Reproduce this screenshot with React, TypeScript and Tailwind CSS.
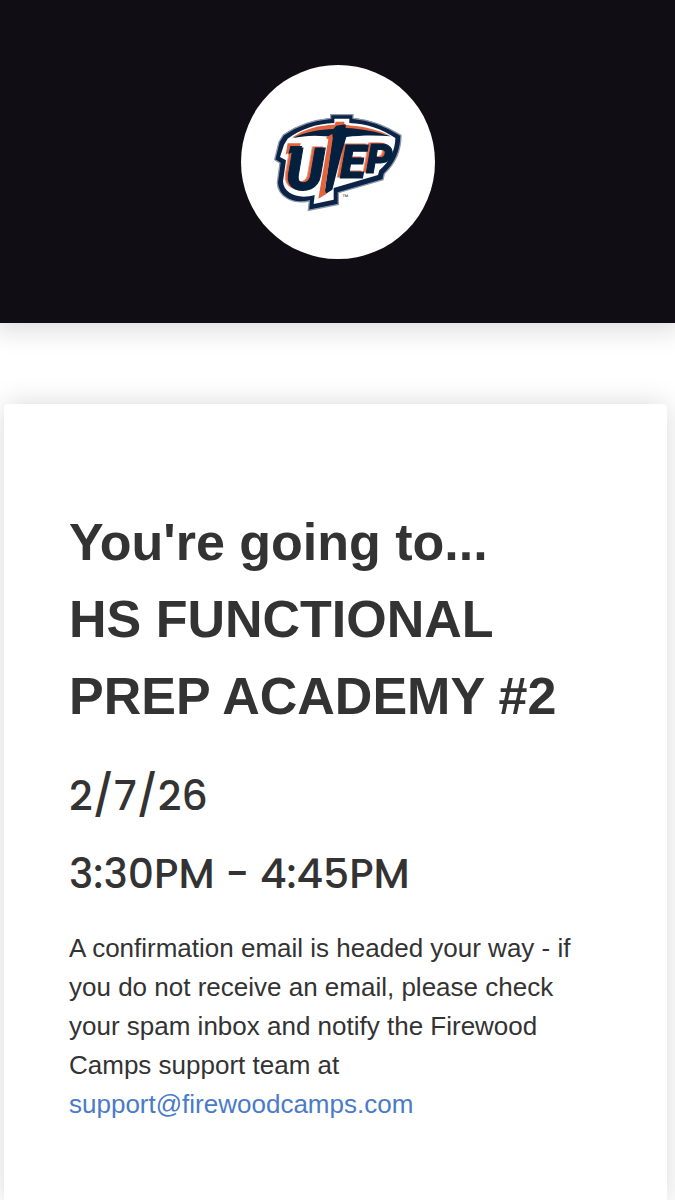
function UtepLogo() {
  return (
    <svg
      className="w-[130px] h-[100px]"
      viewBox="130 170 390 300"
      role="img"
      aria-label="UTEP Miners"
    >
      {/* shield */}
      <path
        d="M303 178H370V189C415 192 464 209 514 240C514 278 500 322 464 355L460 373L326 412V447L236 465L239 437C190 448 145 424 143 382L151 323L135 313L148 260L161 239C200 211 250 194 303 189Z"
        fill="#0b2347"
        stroke="#8d99a8"
        strokeWidth="4"
      />
      <path
        d="M314 190H359V203C410 205 455 220 497 248C497 281 482 318 449 345L445 359L312 398V433L252 446L255 419C208 434 161 415 160 378L169 315L151 305L163 268L174 250C210 223 259 205 314 203Z"
        fill="#fff"
      />

      {/* lettering */}
      <g
        className="[font-family:Roboto,sans-serif] font-black italic [filter:drop-shadow(-8px_-3px_0_#e2643f)]"
        fill="#04203f"
        stroke="#04203f"
        strokeWidth="3"
      >
        <text x="168" y="405" fontSize="178">
          U
        </text>
        <text x="332" y="369" fontSize="140">
          E
        </text>
        <text x="410" y="353" fontSize="124">
          P
        </text>
      </g>

      {/* serifs */}
      <path
        d="M174 264H214L203 290L190 285L168 298Z"
        fill="#e2643f"
      />
      <path d="M182 272H218L206 296L192 289L176 297Z" fill="#04203f" />

      {/* pickaxe */}
      <path
        d="M188 246C225 220 270 209 315 208L318 199H344V208L368 211C413 215 447 225 478 239L350 225L330 222L298 235Z"
        fill="#e2643f"
      />
      <path
        d="M188 249C228 229 275 222 311 221L320 211L348 207V218C397 220 440 229 485 243C438 239 390 240 350 245L334 300L308 403L284 418L308 246L288 243C253 239 221 241 188 249Z"
        fill="#04203f"
      />
      <path
        d="M288 248L308 235L309 251L286 405L290 416L266 430L296 252Z"
        fill="#e2643f"
      />
      <text
        className="[font-family:'Liberation_Sans',sans-serif]"
        x="336"
        y="430"
        fontSize="20"
        fill="#333"
      >
        ™
      </text>
    </svg>
  );
}

export default function App() {
  return (
    <div className="min-h-screen flex flex-col bg-white text-[#333] [font-family:'Liberation_Sans',Arial,sans-serif]">
      <header className="flex justify-center pt-[65px] pb-16 bg-[#100d14] shadow-[0_2px_24px_6px_rgba(0,20,10,0.14)]">
        <div className="size-[194px] rounded-full bg-white flex items-center justify-center">
          <UtepLogo />
        </div>
      </header>

      <main className="grow flex flex-col pt-[81px] pl-1 pr-2 overflow-hidden">
        <section className="grow bg-white px-[65px] pt-[100px] pb-20 rounded-t-sm shadow-[0_0_28px_rgba(0,0,0,0.15)]">
          <h1 className="text-[52px] leading-[77px] font-bold">
            You're going to...
            <br />
            HS FUNCTIONAL PREP ACADEMY #2
          </h1>

          <div className="mt-[22px] text-[41px] leading-[78px] font-medium [font-family:Poppins,Inter,sans-serif]">
            <p>2/7/26</p>
            <p>3:30PM - 4:45PM</p>
          </div>

          <p className="mt-4 text-[26px] leading-[39px]">
            A confirmation email is headed your way - if you do not receive an
            email, please check your spam inbox and notify the Firewood Camps
            support team at{" "}
            <a
              className="text-[#4a7bc8]"
              href="mailto:support@firewoodcamps.com"
            >
              support@firewoodcamps.com
            </a>
          </p>
        </section>
      </main>
    </div>
  );
}
